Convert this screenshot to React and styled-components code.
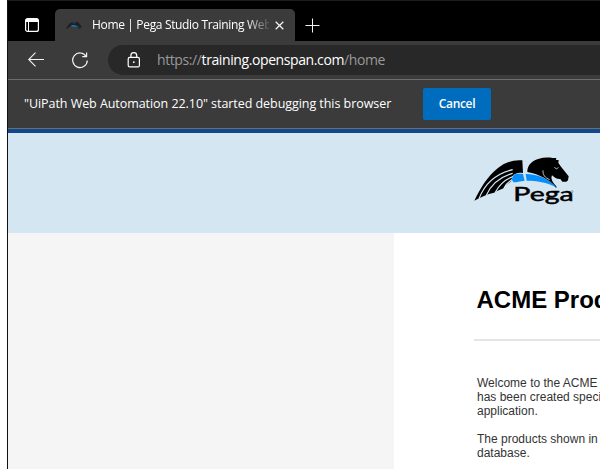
import React from "react";
import styled, { createGlobalStyle } from "styled-components";

const GlobalStyle = createGlobalStyle`
  * { box-sizing: border-box; }
  body { margin: 0; background: #fff; overflow: hidden; }
  svg { display: block; flex: none; }
`;

const ui = `"Open Sans", "Noto Sans", sans-serif`;
const page = `"Liberation Sans", Arial, sans-serif`;

const Window = styled.div`
  width: 593px;
  height: 469px;
  margin-left: 7px;
  overflow: hidden;
  border-left: 1px solid #111;
  border-top: 1px solid #1c1c1c;
  background: #3b3b3b;
  display: flex;
  flex-direction: column;
`;

const TabStrip = styled.div`
  height: 40px;
  flex: none;
  background: #000;
  display: flex;
  align-items: flex-end;
`;

const StripButton = styled.div`
  width: ${(p) => p.$width}px;
  height: 32px;
  display: flex;
  align-items: center;
  justify-content: center;
`;

const Tab = styled.div`
  width: 240px;
  height: 32px;
  padding: 0 11px;
  border-radius: 5px 5px 0 0;
  background: #3b3b3b;
  display: flex;
  align-items: center;
`;

const TabTitle = styled.div`
  width: 177px;
  margin: 0 6px 0 10px;
  overflow: hidden;
  white-space: nowrap;
  color: #fff;
  font: 12px/18px ${ui};
  letter-spacing: -0.34px;
  mask-image: linear-gradient(to right, #000 154px, transparent 180px);
`;

const Toolbar = styled.div`
  height: 38px;
  flex: none;
  padding-left: 20px;
  display: flex;
  align-items: center;
  gap: 28px;
`;

const AddressBar = styled.div`
  flex: 1;
  height: 30px;
  margin-left: -9px;
  padding-left: 19px;
  border-radius: 15px 0 0 15px;
  background: #282828;
  display: flex;
  align-items: center;
  gap: 17px;
`;

const Url = styled.div`
  white-space: nowrap;
  color: #999;
  font: 14px/20px ${ui};
  letter-spacing: -0.4px;
`;

const Host = styled.span`
  color: #fff;
`;

const InfoBar = styled.div`
  height: 50px;
  flex: none;
  padding-left: 16px;
  border: solid #6d6d6d;
  border-width: 1px 0;
  display: flex;
  align-items: center;
`;

const InfoText = styled.div`
  width: 399px;
  white-space: nowrap;
  color: #fff;
  font: 12.5px/18px ${ui};
  letter-spacing: -0.055px;
`;

const CancelButton = styled.button`
  width: 68px;
  height: 32px;
  padding: 0 0 1px;
  border: 0;
  border-radius: 2px;
  background: #006cbe;
  color: #fff;
  font: 600 12px/16px ${ui};
  letter-spacing: -0.35px;
`;

const SiteHeader = styled.header`
  height: 104px;
  flex: none;
  padding: 12px 0 0 457px;
  border-top: 4px solid #11478f;
  background: #d4e6f1;
`;

const Content = styled.div`
  flex: 1;
  display: grid;
  grid-template-columns: 386px 1fr;
  background: #fff;
`;

const Sidebar = styled.aside`
  background: #f5f5f5;
`;

const Article = styled.main`
  padding: 52px 0 0 80px;
  overflow: hidden;
  white-space: nowrap;
  font-family: ${page};
`;

const Heading = styled.h1`
  margin: 0;
  padding: 0 0 25px 2.5px;
  border-bottom: 2px solid #e5e5e5;
  color: #000;
  font-size: 24px;
  line-height: 29px;
`;

const Paragraph = styled.p`
  margin: ${(p) => p.$top}px 0 0 3px;
  color: #333;
  font-size: 12px;
  line-height: 14px;
`;

const Horse = () => (
  <>
    <path d="M28 167 C45 132 68 92 99 69 C121 51 148 43 172 46 L174 84 C158 82 149 86 142 94 L139 108 L120 123 L116 130 L96 138 L87 143 L72 147 L62 151 L42 160 Z" fill="#000" />
    <path d="M42 161 C58 119 92 86 143 74 M64 151 C79 117 104 96 143 85 M91 142 C103 119 120 103 144 95 M116 131 C122 118 132 109 143 103" fill="none" stroke="#d4e6f1" strokeWidth="3.5" />
    <path d="M187 78 C188 59 202 46 222 41 C235 37 250 37 263 39 L274 39 L273 45 L281 45 L280 54 C287 64 302 82 311 94 L309 106 L304 110 L292 110 L286 102 C275 103 267 97 261 91 C257 100 260 110 274 124 L274 130 C254 104 224 88 187 81 Z" fill="#000" />
    <path d="M143 95 C147 86 159 86 174 87 L179 107 C165 108 156 112 146 112 C140 106 140 100 143 95 Z M182 87 C219 88 251 100 275 127 C245 112 215 107 185 107 Z" fill="#078efa" />
    <path d="M234 76 C233 90 240 98 254 104 M269 66 C271 73 277 73 280 67" fill="none" stroke="#d4e6f1" strokeWidth="2.5" />
  </>
);

const PegaLogo = () => (
  <svg width="120" height="70" viewBox="0 0 360 210">
    <Horse />
    <text x="145" y="167" fontFamily="Lato" fontSize="56" fill="#000" stroke="#000" strokeWidth="1.4" textLength="181" lengthAdjust="spacingAndGlyphs">Pega</text>
    <circle cx="321" cy="140" r="3" fill="none" stroke="#777" strokeWidth="2" />
  </svg>
);

const Favicon = () => (
  <svg width="16" height="16" viewBox="0 0 16 16">
    <path d="M0 12 Q3 5 7 5 L8 8 Q5 8 1 12 M8 8 Q8 5 12 5 L16 10 L15 11 L13 10 L14 12 L9 9" fill="#202020" />
    <path d="M5 8.5 Q8 7 13 10 L6 9.5 Z" fill="#087bd5" />
  </svg>
);

const TabActionsIcon = () => (
  <svg width="14" height="14" viewBox="0 0 14 14" fill="none" stroke="#fff">
    <rect x=".6" y=".6" width="12.8" height="12.8" rx="2" strokeWidth="1.2" />
    <path d="M1 2.5 H13" strokeWidth="3" />
    <path d="M3.5 4 V13" strokeWidth="1" />
  </svg>
);

const CloseIcon = () => (
  <svg width="9" height="9" viewBox="0 0 9 9">
    <path d="M.7 .7 L8.3 8.3 M8.3 .7 L.7 8.3" stroke="#f4f4f4" strokeWidth="1.25" />
  </svg>
);

const PlusIcon = () => (
  <svg width="15" height="15" viewBox="0 0 15 15">
    <path d="M7.5 .5 V14.5 M.5 7.5 H14.5" stroke="#f4f4f4" />
  </svg>
);

const BackIcon = () => (
  <svg width="16" height="16" viewBox="0 0 16 16" fill="none" stroke="#f4f4f4" strokeWidth="1.1">
    <path d="M16 7.5 H.8 M7.5 .7 L.7 7.5 L7.5 14.3" />
  </svg>
);

const ReloadIcon = () => (
  <svg width="17" height="17" viewBox="0 0 17 17" fill="none" stroke="#f4f4f4" strokeWidth="1.2">
    <path d="M14.2 4.4 A7.3 7.3 0 1 0 15.3 8.5 M14.6 .5 V4.7 H10.3" />
  </svg>
);

const LockIcon = () => (
  <svg width="13" height="16" viewBox="0 0 13 16" fill="none" stroke="#fff" strokeWidth="1.2">
    <rect x="1.2" y="5.4" width="11.2" height="9.5" rx="1.5" />
    <path d="M3.9 5.4 V3.6 A2.9 2.9 0 0 1 9.7 3.6 V5.4" />
    <circle cx="6.8" cy="10.2" r=".9" fill="#fff" stroke="none" />
  </svg>
);

export default function App() {
  return (
    <>
      <GlobalStyle />
      <Window>
        <TabStrip>
          <StripButton $width={47}><TabActionsIcon /></StripButton>
          <Tab>
            <Favicon />
            <TabTitle>Home | Pega Studio Training Web</TabTitle>
            <CloseIcon />
          </Tab>
          <StripButton $width={35}><PlusIcon /></StripButton>
        </TabStrip>
        <Toolbar>
          <BackIcon />
          <ReloadIcon />
          <AddressBar>
            <LockIcon />
            <Url>https://<Host>training.openspan.com</Host>/home</Url>
          </AddressBar>
        </Toolbar>
        <InfoBar>
          <InfoText>"UiPath Web Automation 22.10" started debugging this browser</InfoText>
          <CancelButton>Cancel</CancelButton>
        </InfoBar>
        <SiteHeader><PegaLogo /></SiteHeader>
        <Content>
          <Sidebar />
          <Article>
            <Heading>ACME Products</Heading>
            <Paragraph $top={35}>
              Welcome to the ACME<br />has been created specifically<br />application.
            </Paragraph>
            <Paragraph $top={14}>
              The products shown in<br />database.
            </Paragraph>
          </Article>
        </Content>
      </Window>
    </>
  );
}
